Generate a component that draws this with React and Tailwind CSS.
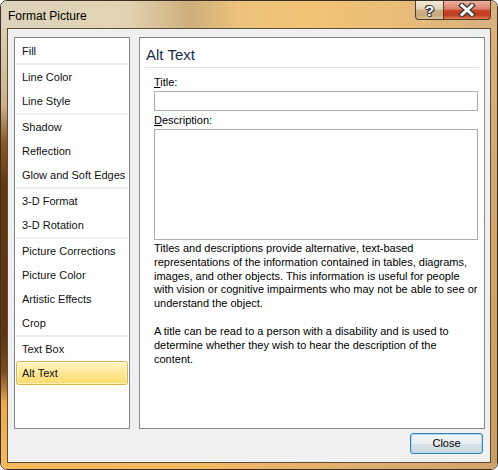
const groups = [
  ['Fill'],
  ['Line Color', 'Line Style'],
  ['Shadow', 'Reflection', 'Glow and Soft Edges'],
  ['3-D Format', '3-D Rotation'],
  ['Picture Corrections', 'Picture Color', 'Artistic Effects', 'Crop'],
  ['Text Box', 'Alt Text'],
];

function NavItem({ label }) {
  if (label === 'Alt Text') {
    return (
      <div className="h-[24px] flex items-center pl-[5px] rounded-[3px] border border-[#d9b44a] bg-[linear-gradient(180deg,#fff3c2_0%,#fee89a_45%,#fddc6a_100%)] shadow-[inset_0_0_0_1px_rgba(255,255,255,0.55)] text-[#111]">
        {label}
      </div>
    );
  }
  return <div className="h-[24px] flex items-center pl-[6px] text-[#111]">{label}</div>;
}

export default function App() {
  return (
    <div className="w-[498px] h-[470px] bg-white font-['Liberation_Sans',Arial,sans-serif] text-[11px]">
      <div className="w-[498px] h-[470px] flex flex-col rounded-[7px] border border-[#3a3026] overflow-hidden">
        {/* Title bar */}
        <div className="h-[27px] flex items-start bg-[linear-gradient(90deg,#dcd3bd_0%,#e2d4b2_25%,#cfae7c_38%,#ecc27c_48%,#f2c475_62%,#e9bc79_80%,#d8b07e_100%)]">
          <div className="pl-[7px] pt-[7px] text-[12px] leading-[16px] text-black">Format Picture</div>
          <div className="ml-auto mr-[6px] flex">
            <div className="w-[28px] h-[19px] flex items-center justify-center border border-t-0 border-r-0 border-[#4e3e2b] rounded-bl-[4px] bg-[linear-gradient(180deg,#f3ead9_0%,#e3d1b3_45%,#cdb287_52%,#c6a979_80%,#dcc49a_100%)]">
              <span className="text-white font-bold text-[15px] leading-none [text-shadow:1px_0_#3d3d3d,-1px_0_#3d3d3d,0_1px_#3d3d3d,0_-1px_#3d3d3d,1px_1px_#3d3d3d,-1px_-1px_#3d3d3d]">?</span>
            </div>
            <div className="w-[48px] h-[19px] flex items-center justify-center border border-t-0 border-[#4e3e2b] rounded-br-[4px] bg-[linear-gradient(180deg,#eab0a0_0%,#dc8068_45%,#c8452b_52%,#c03a20_78%,#e2804f_100%)]">
              <svg width="20" height="14" viewBox="0 0 20 14">
                <path d="M5 2.5 L15 11.5 M15 2.5 L5 11.5" stroke="#3b3b3b" strokeWidth="5.5" strokeLinecap="square" />
                <path d="M5 2.5 L15 11.5 M15 2.5 L5 11.5" stroke="#ffffff" strokeWidth="3" strokeLinecap="square" />
              </svg>
            </div>
          </div>
        </div>

        <div className="flex h-[435px]">
          <div className="w-[6px] bg-[linear-gradient(180deg,#ddd0b2_0%,#cbb08a_18%,#8a5a2a_26%,#64390f_36%,#5e3510_70%,#7a4a1c_79%,#e8a850_86%,#f6b95e_100%)]" />

          {/* Client */}
          <div className="w-[484px] border border-[#5b4c3a] bg-[#f0f0f0] flex flex-col">
            <div className="flex gap-[9px] pl-[6px] pt-[8px]">
              {/* Category list */}
              <div className="w-[116px] h-[392px] border border-[#828790] bg-white pt-[1px] px-[1px]">
                {groups.map((g, i) => (
                  <div key={i}>
                    {i > 0 && <div className="h-[2px] bg-[#eceef2]" />}
                    {g.map((label) => (
                      <NavItem key={label} label={label} />
                    ))}
                  </div>
                ))}
              </div>

              {/* Alt text pane */}
              <div className="w-[346px] h-[392px] border border-[#828790] bg-white px-[5px]">
                <div className="mt-[7px] pl-[1px] pb-[2px] border-b border-[#dbe2ea]">
                  <div className="text-[15px] leading-[20px] text-[#1a2c4a]">Alt Text</div>
                </div>
                <div className="pl-[9px] pr-[1px] text-black">
                  <div className="mt-[7px] leading-[14px]">
                    <u>T</u>itle:
                  </div>
                  <div className="mt-[2px] h-[20px] border border-[#abadb3] bg-white" />
                  <div className="mt-[2px] leading-[14px]">
                    <u>D</u>escription:
                  </div>
                  <div className="mt-[2px] h-[111px] border border-[#abadb3] bg-white" />
                  <p className="mt-[2px] leading-[13.8px] whitespace-nowrap">
                    Titles and descriptions provide alternative, text-based
                    <br />
                    representations of the information contained in tables, diagrams,
                    <br />
                    images, and other objects. This information is useful for people
                    <br />
                    with vision or cognitive impairments who may not be able to see or
                    <br />
                    understand the object.
                  </p>
                  <p className="mt-[14px] leading-[13.8px] whitespace-nowrap">
                    A title can be read to a person with a disability and is used to
                    <br />
                    determine whether they wish to hear the description of the
                    <br />
                    content.
                  </p>
                </div>
              </div>
            </div>

            <div className="flex justify-end pr-[7px] mt-[4px]">
              <button className="w-[73px] h-[21px] rounded-[3px] border border-[#3c7fb1] bg-[linear-gradient(180deg,#f4f6f8_0%,#eaeef1_50%,#d9e1e7_50%,#ccd6de_100%)] shadow-[inset_0_0_0_1px_#a7dcf6] text-[11px] text-black">
                Close
              </button>
            </div>
          </div>

          <div className="w-[6px] bg-[linear-gradient(180deg,#d9b27c_0%,#cfa56c_50%,#c99f66_100%)]" />
        </div>

        <div className="h-[6px] bg-[linear-gradient(90deg,#f6b95e_0%,#f3b862_40%,#dcae70_75%,#cfa46a_100%)]" />
      </div>
    </div>
  );
}
